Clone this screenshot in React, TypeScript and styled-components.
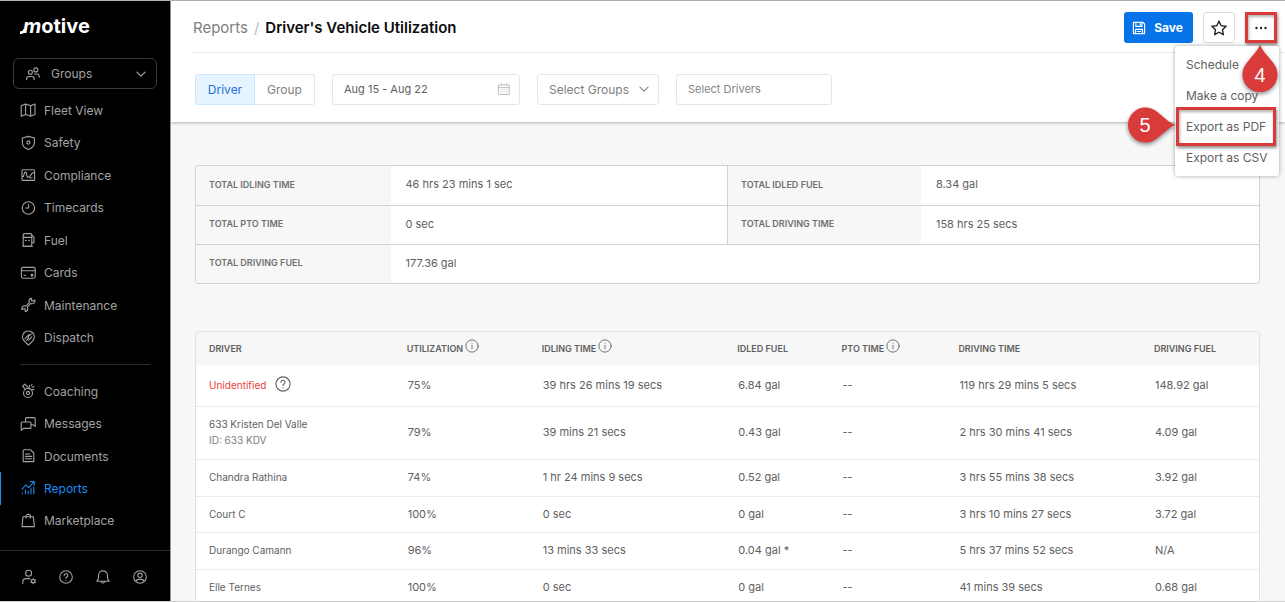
import React from "react";
import styled, { createGlobalStyle, css } from "styled-components";

const sans = `Inter, "Liberation Sans", Arial, sans-serif`;

const GlobalStyle = createGlobalStyle`
  *, *::before, *::after { box-sizing: border-box; }
  body { margin: 0; font-family: ${sans}; font-size: 11px; color: #606060; background: #f7f7f7; }
  button, input, select { font: inherit; color: inherit; margin: 0; }
  button { cursor: pointer; }
  ul { list-style: none; margin: 0; padding: 0; }
  a { color: inherit; text-decoration: none; }
`;

const Shell = styled.div`
  display: grid;
  grid-template-columns: 171px minmax(0, 1fr);
  height: 100vh;
  border-top: 1px solid #b4b4b4;
  border-bottom: 1px solid #cfcfcf;
`;

/* ---------- Sidebar ---------- */

const Sidebar = styled.aside`
  display: flex;
  flex-direction: column;
  min-height: 0;
  background: #000;
  border-right: 1px solid #9a9a9a;
  color: #a3a3a3;
`;

const Logo = styled.a`
  display: flex;
  align-items: center;
  flex: none;
  height: 57px;
  padding: 0 0 8px 20px;
  color: #fff;
  font-size: 20px;
  font-weight: 700;
`;

const LogoTail = styled.svg`
  width: 6px;
  height: 12px;
  margin: 4px -3px 0 0;
`;

const LogoLead = styled.span`
  font-style: italic;
`;

const GroupPicker = styled.label`
  display: flex;
  align-items: center;
  flex: none;
  height: 31px;
  margin: 0 13px 5px;
  padding: 0 9px 0 11px;
  border: 1px solid #3a3a3a;
  border-radius: 6px;
`;

const BareSelect = styled.select`
  flex: 1;
  min-width: 0;
  padding: 0;
  border: 0;
  outline: 0;
  background: transparent;
  appearance: none;
  font-size: 12px;
`;

const GroupSelect = styled(BareSelect)`
  margin-left: 10px;
`;

const NavList = styled.ul<{ $rows: number }>`
  display: flex;
  flex-direction: column;
  flex: none;
  height: ${(p) => (p.$rows === 8 ? 260 : 162)}px;
`;

const NavItem = styled.li`
  display: flex;
  flex: 1;
`;

const NavLink = styled.a<{ $active?: boolean }>`
  display: flex;
  align-items: center;
  flex: 1;
  gap: 8px;
  padding-left: 20px;
  font-size: 12px;
  ${(p) =>
    p.$active &&
    css`
      color: #1a8cf0;
      box-shadow: inset 1px 0 0 #1a8cf0;
    `}
`;

const NavRule = styled.hr`
  width: 130px;
  margin: 10px 20px;
  border: 0;
  border-top: 1px solid #2e2e2e;
`;

const SidebarFooter = styled.div`
  display: flex;
  gap: 21px;
  margin-top: 13px;
  padding: 18px 21px 0;
  border-top: 1px solid #2e2e2e;
`;

const IconButton = styled.button`
  display: flex;
  padding: 0;
  border: 0;
  background: transparent;
`;

/* ---------- Header ---------- */

const Main = styled.main`
  display: flex;
  flex-direction: column;
  min-width: 0;
  min-height: 0;
`;

const Header = styled.header`
  position: relative;
  z-index: 1;
  flex: none;
  background: #fff;
  box-shadow: 0 1px 3px rgba(0, 0, 0, 0.3);
`;

const TitleBar = styled.div`
  display: flex;
  align-items: center;
  justify-content: space-between;
  height: 52px;
  margin-left: 20px;
  padding: 2px 8px 0 0;
  border-bottom: 1px solid #ececec;
`;

const Crumbs = styled.nav`
  display: flex;
  align-items: center;
  gap: 6px;
  padding-left: 2px;
  font-size: 15px;
  color: #808080;
`;

const Slash = styled.span`
  color: #bdbdbd;
`;

const PageTitle = styled.h1`
  margin: 0;
  font-size: 15px;
  font-weight: 600;
  color: #0c0c0c;
`;

const Actions = styled.div`
  display: flex;
  align-items: center;
  gap: 10px;
`;

const SaveButton = styled.button`
  display: flex;
  align-items: center;
  gap: 8px;
  height: 31px;
  padding: 0 10px 0 8px;
  border: 0;
  border-radius: 3px;
  background: #0674e8;
  color: #fff;
  font-size: 12px;
  font-weight: 700;
`;

const SquareButton = styled.button`
  display: flex;
  align-items: center;
  justify-content: center;
  width: 32px;
  height: 31px;
  padding: 0;
  border: 1px solid #dcdcdc;
  border-radius: 3px;
  background: #fff;
  color: #1c1c1c;
`;

const MoreWrap = styled.div`
  position: relative;
`;

const marked = css`
  border: 3px solid #d93a3a;
  border-radius: 0;
  box-shadow: 1px 2px 3px rgba(0, 0, 0, 0.45), inset 1px 2px 3px rgba(0, 0, 0, 0.3);
`;

const MoreButton = styled(SquareButton)`
  ${marked}
`;

const Menu = styled.ul`
  position: absolute;
  top: 34px;
  right: -2px;
  width: 104px;
  padding: 3px 0;
  border-radius: 3px;
  background: #fff;
  box-shadow: 0 0 4px rgba(0, 0, 0, 0.35);
`;

const MenuItem = styled.li`
  position: relative;
`;

const MenuButton = styled.button`
  display: block;
  width: 100%;
  height: 31px;
  padding: 0 0 0 11px;
  border: 0;
  background: transparent;
  text-align: left;
  white-space: nowrap;
  font-size: 12px;
`;

const MenuMark = styled.span`
  position: absolute;
  inset: -4px 3px -4px 1px;
  pointer-events: none;
  ${marked}
`;

const Pin = styled.span<{ $side: "top" | "left" }>`
  position: absolute;
  z-index: 2;
  display: flex;
  align-items: center;
  justify-content: center;
  color: #fff;
  font-family: "Liberation Sans", Arial, sans-serif;
  font-size: 20px;
  pointer-events: none;
  ${(p) =>
    p.$side === "top"
      ? css`
          top: 32px;
          left: -3px;
          width: 36px;
          height: 50px;
          padding-top: 12px;
        `
      : css`
          top: -4px;
          right: 103px;
          width: 50px;
          height: 36px;
          padding-right: 12px;
        `}
`;

const PinShape = styled.svg`
  position: absolute;
  inset: 0;
  z-index: -1;
  overflow: visible;
  filter: drop-shadow(0 2px 2px rgba(0, 0, 0, 0.45));
`;

/* ---------- Filters ---------- */

const Filters = styled.div`
  display: flex;
  align-items: center;
  gap: 17px;
  height: 69px;
  padding: 3px 24px 0;
`;

const Segmented = styled.div`
  display: flex;
`;

const Segment = styled.button<{ $on?: boolean }>`
  height: 31px;
  width: 60px;
  padding: 0;
  border: 1px solid #e6e6e6;
  border-left: 0;
  border-radius: 0 3px 3px 0;
  background: #fff;
  color: #808080;
  font-size: 12px;
  ${(p) =>
    p.$on &&
    css`
      border: 1px solid #cbe6fb;
      border-radius: 3px 0 0 3px;
      background: #e6f4ff;
      color: #2173d6;
    `}
`;

const Field = styled.label<{ $width: number }>`
  display: flex;
  align-items: center;
  width: ${(p) => p.$width}px;
  height: 31px;
  padding: 0 8px 0 11px;
  border: 1px solid #e6e6e6;
  border-radius: 3px;
  background: #fff;
  color: #808080;
`;

const FieldInput = styled.input`
  flex: 1;
  min-width: 0;
  padding: 0;
  border: 0;
  outline: 0;
  background: transparent;
  font-size: 11px;
  color: #606060;
  &::placeholder {
    color: #858585;
    opacity: 1;
  }
`;

/* ---------- Content ---------- */

const Content = styled.div`
  flex: 1;
  min-height: 0;
  overflow-y: auto;
  scrollbar-width: none;
  padding: 43px 25px 24px 24px;
`;

const Panel = styled.div`
  overflow: hidden;
  border: 1px solid #d2d2d2;
  border-radius: 3px;
  background: #fff;
  & + & {
    margin-top: 47px;
    border-color: #e2e2e2;
  }
`;

const SummaryTable = styled.table`
  width: 100%;
  table-layout: fixed;
  border-collapse: collapse;
  tr + tr > * {
    border-top: 1px solid #d2d2d2;
  }
  td + th {
    border-left: 1px solid #d2d2d2;
  }
`;

const SummaryLabel = styled.th`
  height: 39px;
  padding: 0 0 2px 13px;
  background: #f7f7f7;
  text-align: left;
  font-size: 9px;
  font-weight: 600;
  color: #707070;
`;

const SummaryValue = styled.td`
  padding: 0 0 2px 15px;
`;

const DataTable = styled.table`
  width: 100%;
  table-layout: fixed;
  border-collapse: collapse;
  tbody tr + tr > td {
    border-top: 1px solid #ececec;
  }
`;

const HeadCell = styled.th`
  height: 33px;
  padding: 0 0 1px 13px;
  background: #f7f7f7;
  text-align: left;
  font-size: 9px;
  font-weight: 600;
  color: #606060;
  white-space: nowrap;
`;

const HeadInner = styled.span`
  display: flex;
  align-items: center;
  gap: 2px;
  svg {
    margin-bottom: 4px;
  }
`;

const Row = styled.tr<{ $height: number }>`
  height: ${(p) => p.$height}px;
`;

const Cell = styled.td`
  padding: 0 0 1px 14px;
  white-space: nowrap;
`;

const DriverCell = styled(Cell)`
  padding-left: 13px;
  font-size: 10px;
`;

const Unidentified = styled.span`
  display: flex;
  align-items: center;
  gap: 8px;
  color: #f0403a;
  svg {
    margin-bottom: 2px;
  }
`;

const DriverId = styled.div`
  margin-top: 3px;
  line-height: 14px;
  color: #808080;
`;

/* ---------- Icons ---------- */

type IconProps = { size?: number; width?: number; color?: string; children: React.ReactNode };

const Icon = ({ size = 16, width = 1.1, color = "currentColor", children }: IconProps) => (
  <svg
    width={size}
    height={size}
    viewBox="0 0 16 16"
    fill="none"
    stroke={color}
    strokeWidth={width}
    strokeLinecap="round"
    strokeLinejoin="round"
    aria-hidden="true"
  >
    {children}
  </svg>
);

const icons = {
  groups: (
    <>
      <circle cx="5.4" cy="6.2" r="2" />
      <path d="M1.6 13.8v-.9a2.4 2.4 0 0 1 2.4-2.4h2.8a2.4 2.4 0 0 1 2.4 2.4v.9" />
      <circle cx="10.8" cy="3.9" r="2" />
      <path d="M9.6 8h2.2a2.4 2.4 0 0 1 2.4 2.4v.9" />
    </>
  ),
  map: <path d="M1.2 3.8 5.6 2l5 1.8L15 2v10.4l-4.4 1.8-5-1.8-4.4 1.8ZM5.6 2v10.4M10.6 3.8v10.4" />,
  shield: (
    <>
      <path d="M8.4 1.4 14.4 3v5c0 3.2-2.6 5.2-6 6.6-3.4-1.4-6-3.4-6-6.6V3Z" />
      <circle cx="8.4" cy="7.5" r="1.6" />
    </>
  ),
  compliance: (
    <>
      <rect x="2" y="2.8" width="12.6" height="10.6" rx="1" />
      <path d="M2.2 9.6h1.2l1.2-4.2h1.6l1 4.8 2.2-.4 2.8-3.6 1.8-.8M9.8 10.8h2.4" />
    </>
  ),
  clock: (
    <>
      <circle cx="8.4" cy="8" r="6.2" />
      <path d="M8.6 4.4V8H5.4" />
    </>
  ),
  fuel: (
    <>
      <rect x="3.2" y="1.6" width="8.6" height="12.6" rx="1.2" />
      <path d="M3.2 5.4h8.6M5.4 8.4h.8M8.8 8.4h.6M2.6 14.2h9.8M11.8 3.2l2.2 2v5.6h-2.2" />
    </>
  ),
  card: (
    <>
      <rect x="1.4" y="2.4" width="13.8" height="10.8" rx="1.6" />
      <path d="M1.4 5.8h13.8M4 10.2h1.6" />
      <circle cx="12" cy="10.2" r=".9" fill="currentColor" />
    </>
  ),
  wrench: (
    <path d="M9.4 5.4 9 3.8c0-1.6 1-2.4 2.6-2.6v2.4l1.2.6 2-1.2c.6 2.2-.8 3.8-2.8 3.8l-1.4-.2-3.2 3.2.4 1.600c0 1.600-1 2.800-2.600 3v-2.400L4 11.400l-2.200 1.200C1.400 10.400 2.800 8.800 4.600 8.800l1.600.2Z" />
  ),
  dispatch: (
    <>
      <path d="M8.4 15c3.2-2.6 6-5 6-8a6 6 0 0 0-12 0c0 3 2.8 5.4 6 8Z" />
      <path d="M5 8.8 8.8 4.6M6.6 10.4l1.6-1.8.4-2.4 2.6-2.2M8.8 10.2l3-3.4" />
    </>
  ),
  whistle: (
    <>
      <circle cx="8" cy="10" r="4.5" />
      <circle cx="8" cy="10" r="1.6" />
      <path d="m2.6 3.2 2.2-2 5 4.800M2.600 3.200 5.400 6.400M9.600 2.400v1.400M12 1.400l-.6 1.200M12.400 4.200l1.600-.8M11.800 6.600h2" />
    </>
  ),
  messages: (
    <>
      <path d="M5.6 5.6V2.6a1 1 0 0 1 1-1h7.6a1 1 0 0 1 1 1v7.8l-2.2-1.6h-2" />
      <path d="M1.2 14.4V7a1 1 0 0 1 1-1H10a1 1 0 0 1 1 1v4.400a1 1 0 0 1-1 1H3.400Z" />
    </>
  ),
  document: <path d="M4 1.8h6.6L13.8 5v8.6H3.2v-11ZM5.4 6h4.4M5.4 8.4h6.2M5.4 10.8h6.2" />,
  reports: (
    <>
      <path d="M2 9.4 5.8 5l3 2.6 5-5.6M10.6 1.6h3.6v3.6" />
      <path d="M2.4 13.8v-.8M5.4 13.8V10M8.2 13.8v-2.6M11 13.8V8.2M13.8 13.8V7" />
    </>
  ),
  bag: <path d="M3 3.8h10.4l1 9.8H2ZM6 5V3a2.2 1.6 0 0 1 4.4 0v2" />,
  userGear: (
    <>
      <circle cx="7.6" cy="4.2" r="3" />
      <path d="M1.8 14.4v-1.8a3 3 0 0 1 3-3H8.8" />
      <circle cx="12.2" cy="12.2" r="1.7" />
      <path d="M12.2 9.6v.6M12.2 14.2v.6M9.9 10.9l.6.3M13.9 13.2l.6.3M9.9 13.5l.6-.3M13.9 11.2l.6-.3" />
    </>
  ),
  help: (
    <>
      <circle cx="8" cy="8" r="6.3" />
      <path d="M6.2 6.5a1.8 1.8 0 1 1 2.7 1.5c-.6.4-.9.6-.9 1.3M8 11.3v.2" />
    </>
  ),
  bell: (
    <>
      <path d="M1.8 12.2h12.4c-1.2-1-1.7-2-1.7-3.4V6.4a4.5 4.5 0 0 0-9 0v2.4c0 1.4-.5 2.4-1.7 3.4Z" />
      <path d="M6.4 12.4a1.6 1.6 0 0 0 3.2 0" />
    </>
  ),
  account: (
    <>
      <circle cx="8" cy="8" r="6.3" />
      <circle cx="8" cy="6.3" r="2.2" />
      <path d="M4 12.4c.4-1.6 1.4-2 2.4-2h3.2c1 0 2 .4 2.4 2" />
    </>
  ),
  chevron: <path d="m2.6 5.4 5.4 5.4 5.4-5.4" />,
  calendar: (
    <>
      <path d="M2 3.4h12v10.8H2ZM2 6.4h12M4.8 1.8v1.6M11.2 1.8v1.6" />
      <path d="M4.6 9h.4M7.8 9h.4M11 9h.4M4.6 11.6h.4M7.8 11.6h.4M11 11.6h.4" />
    </>
  ),
  save: (
    <path d="M1.6 1.6h11l1.8 1.8v11H1.6ZM4.4 1.6v4.6h7V1.6M4 14.4V9.6h8v4.8M9.4 3v1.6M6 12h4" />
  ),
  star: (
    <path
      d="m8 1.2 2.1 4.4 4.9.7-3.5 3.4.8 4.8L8 12.2l-4.3 2.3.8-4.8L1 6.3l4.900-.7Z"
      strokeLinejoin="miter"
    />
  ),
  info: (
    <>
      <circle cx="8" cy="8" r="7" />
      <path d="M8 7.2v4M8 4.7v.2" />
    </>
  ),
};

/* ---------- Data ---------- */

const primaryNav: [string, React.ReactNode][] = [
  ["Fleet View", icons.map],
  ["Safety", icons.shield],
  ["Compliance", icons.compliance],
  ["Timecards", icons.clock],
  ["Fuel", icons.fuel],
  ["Cards", icons.card],
  ["Maintenance", icons.wrench],
  ["Dispatch", icons.dispatch],
];

const secondaryNav: [string, React.ReactNode][] = [
  ["Coaching", icons.whistle],
  ["Messages", icons.messages],
  ["Documents", icons.document],
  ["Reports", icons.reports],
  ["Marketplace", icons.bag],
];

const footerNav: [string, React.ReactNode][] = [
  ["Admin", icons.userGear],
  ["Help", icons.help],
  ["Notifications", icons.bell],
  ["Account", icons.account],
];

const columns = [
  { name: "DRIVER", share: "18.6%" },
  { name: "UTILIZATION", share: "12.7%", info: true },
  { name: "IDLING TIME", share: "18.4%", info: true },
  { name: "IDLED FUEL", share: "9.8%" },
  { name: "PTO TIME", share: "11%", info: true },
  { name: "DRIVING TIME", share: "18.4%" },
  { name: "DRIVING FUEL", share: "11.1%" },
];

const drivers = [
  { name: "Unidentified", unknown: true, height: 41, cells: ["75%", "39 hrs 26 mins 19 secs", "6.84 gal", "--", "119 hrs 29 mins 5 secs", "148.92 gal"] },
  { name: "633 Kristen Del Valle", id: "ID: 633 KDV", height: 53, cells: ["79%", "39 mins 21 secs", "0.43 gal", "--", "2 hrs 30 mins 41 secs", "4.09 gal"] },
  { name: "Chandra Rathina", height: 37, cells: ["74%", "1 hr 24 mins 9 secs", "0.52 gal", "--", "3 hrs 55 mins 38 secs", "3.92 gal"] },
  { name: "Court C", height: 36, cells: ["100%", "0 sec", "0 gal", "--", "3 hrs 10 mins 27 secs", "3.72 gal"] },
  { name: "Durango Camann", height: 37, cells: ["96%", "13 mins 33 secs", "0.04 gal *", "--", "5 hrs 37 mins 52 secs", "N/A"] },
  { name: "Elle Ternes", height: 36, cells: ["100%", "0 sec", "0 gal", "--", "41 mins 39 secs", "0.68 gal"] },
];

const menuItems = ["Schedule", "Make a copy", "Export as PDF", "Export as CSV"];

const Nav = ({ items, active }: { items: [string, React.ReactNode][]; active?: string }) => (
  <NavList $rows={items.length}>
    {items.map(([name, icon]) => (
      <NavItem key={name}>
        <NavLink href="#" $active={name === active}>
          <Icon>{icon}</Icon>
          {name}
        </NavLink>
      </NavItem>
    ))}
  </NavList>
);

export default function App() {
  return (
    <>
      <GlobalStyle />
      <Shell>
        <Sidebar>
          <Logo href="#">
            <LogoTail viewBox="0 0 6 12" fill="none" stroke="currentColor" strokeWidth="2.6" aria-hidden="true">
              <path d="M0 10.6h1.4c1.6 0 2.6-1 3.6-3.2" />
            </LogoTail>
            <span>
              <LogoLead>m</LogoLead>otive
            </span>
          </Logo>
          <GroupPicker>
            <Icon>{icons.groups}</Icon>
            <GroupSelect aria-label="Groups">
              <option>Groups</option>
            </GroupSelect>
            <Icon size={12} width={1.6}>{icons.chevron}</Icon>
          </GroupPicker>
          <Nav items={primaryNav} />
          <NavRule />
          <Nav items={secondaryNav} active="Reports" />
          <SidebarFooter>
            {footerNav.map(([name, icon]) => (
              <IconButton key={name} aria-label={name}>
                <Icon>{icon}</Icon>
              </IconButton>
            ))}
          </SidebarFooter>
        </Sidebar>

        <Main>
          <Header>
            <TitleBar>
              <Crumbs aria-label="Breadcrumb">
                <a href="#">Reports</a>
                <Slash>/</Slash>
                <PageTitle>Driver's Vehicle Utilization</PageTitle>
              </Crumbs>
              <Actions>
                <SaveButton>
                  <Icon size={14} width={1.3}>{icons.save}</Icon>
                  Save
                </SaveButton>
                <SquareButton aria-label="Favorite">
                  <Icon width={1.3}>{icons.star}</Icon>
                </SquareButton>
                <MoreWrap>
                  <MoreButton aria-label="More actions">
                    <svg width="14" height="4" viewBox="0 0 14 4" fill="#222" aria-hidden="true">
                      <circle cx="2.5" cy="2" r="1.2" />
                      <circle cx="7" cy="2" r="1.2" />
                      <circle cx="11.5" cy="2" r="1.2" />
                    </svg>
                  </MoreButton>
                  <Menu>
                    {menuItems.map((item) => (
                      <MenuItem key={item}>
                        <MenuButton>{item}</MenuButton>
                        {item === "Export as PDF" && (
                          <>
                            <MenuMark />
                            <Pin $side="left">
                              <PinShape viewBox="0 0 50 36" fill="#d93a3a">
                                <path d="M50 18C44 17 36 8 30 4A17.5 17.5 0 1 0 30 32C36 28 44 19 50 18Z" />
                              </PinShape>
                              5
                            </Pin>
                          </>
                        )}
                      </MenuItem>
                    ))}
                  </Menu>
                  <Pin $side="top">
                    <PinShape viewBox="0 0 36 50" fill="#d93a3a">
                      <path d="M18 0C17 6 8 14 4 20A17.5 17.5 0 1 0 32 20C28 14 19 6 18 0Z" />
                    </PinShape>
                    4
                  </Pin>
                </MoreWrap>
              </Actions>
            </TitleBar>
            <Filters>
              <Segmented>
                <Segment $on aria-pressed="true">Driver</Segment>
                <Segment aria-pressed="false">Group</Segment>
              </Segmented>
              <Field $width={188}>
                <FieldInput aria-label="Date range" defaultValue="Aug 15 - Aug 22" />
                <Icon size={14} width={1} color="#b5b5b5">{icons.calendar}</Icon>
              </Field>
              <Field $width={122}>
                <BareSelect aria-label="Select Groups">
                  <option>Select Groups</option>
                </BareSelect>
                <Icon size={12} width={1.4}>{icons.chevron}</Icon>
              </Field>
              <Field $width={156}>
                <FieldInput aria-label="Select Drivers" placeholder="Select Drivers" />
              </Field>
            </Filters>
          </Header>

          <Content>
            <Panel>
              <SummaryTable>
                <colgroup>
                  <col style={{ width: "18.3%" }} />
                  <col style={{ width: "31.7%" }} />
                  <col style={{ width: "18.2%" }} />
                  <col />
                </colgroup>
                <tbody>
                  <tr>
                    <SummaryLabel scope="row">TOTAL IDLING TIME</SummaryLabel>
                    <SummaryValue>46 hrs 23 mins 1 sec</SummaryValue>
                    <SummaryLabel scope="row">TOTAL IDLED FUEL</SummaryLabel>
                    <SummaryValue>8.34 gal</SummaryValue>
                  </tr>
                  <tr>
                    <SummaryLabel scope="row">TOTAL PTO TIME</SummaryLabel>
                    <SummaryValue>0 sec</SummaryValue>
                    <SummaryLabel scope="row">TOTAL DRIVING TIME</SummaryLabel>
                    <SummaryValue>158 hrs 25 secs</SummaryValue>
                  </tr>
                  <tr>
                    <SummaryLabel scope="row">TOTAL DRIVING FUEL</SummaryLabel>
                    <SummaryValue colSpan={3}>177.36 gal</SummaryValue>
                  </tr>
                </tbody>
              </SummaryTable>
            </Panel>

            <Panel>
              <DataTable>
                <colgroup>
                  {columns.map((c) => (
                    <col key={c.name} style={{ width: c.share }} />
                  ))}
                </colgroup>
                <thead>
                  <tr>
                    {columns.map((c) => (
                      <HeadCell key={c.name} scope="col">
                        <HeadInner>
                          {c.name}
                          {c.info && <Icon size={14} width={1}>{icons.info}</Icon>}
                        </HeadInner>
                      </HeadCell>
                    ))}
                  </tr>
                </thead>
                <tbody>
                  {drivers.map((d) => (
                    <Row key={d.name} $height={d.height}>
                      <DriverCell>
                        {d.unknown ? (
                          <Unidentified>
                            {d.name}
                            <Icon size={18} width={1} color="#606060">{icons.help}</Icon>
                          </Unidentified>
                        ) : (
                          d.name
                        )}
                        {d.id && <DriverId>{d.id}</DriverId>}
                      </DriverCell>
                      {d.cells.map((value, i) => (
                        <Cell key={i}>{value}</Cell>
                      ))}
                    </Row>
                  ))}
                </tbody>
              </DataTable>
            </Panel>
          </Content>
        </Main>
      </Shell>
    </>
  );
}
